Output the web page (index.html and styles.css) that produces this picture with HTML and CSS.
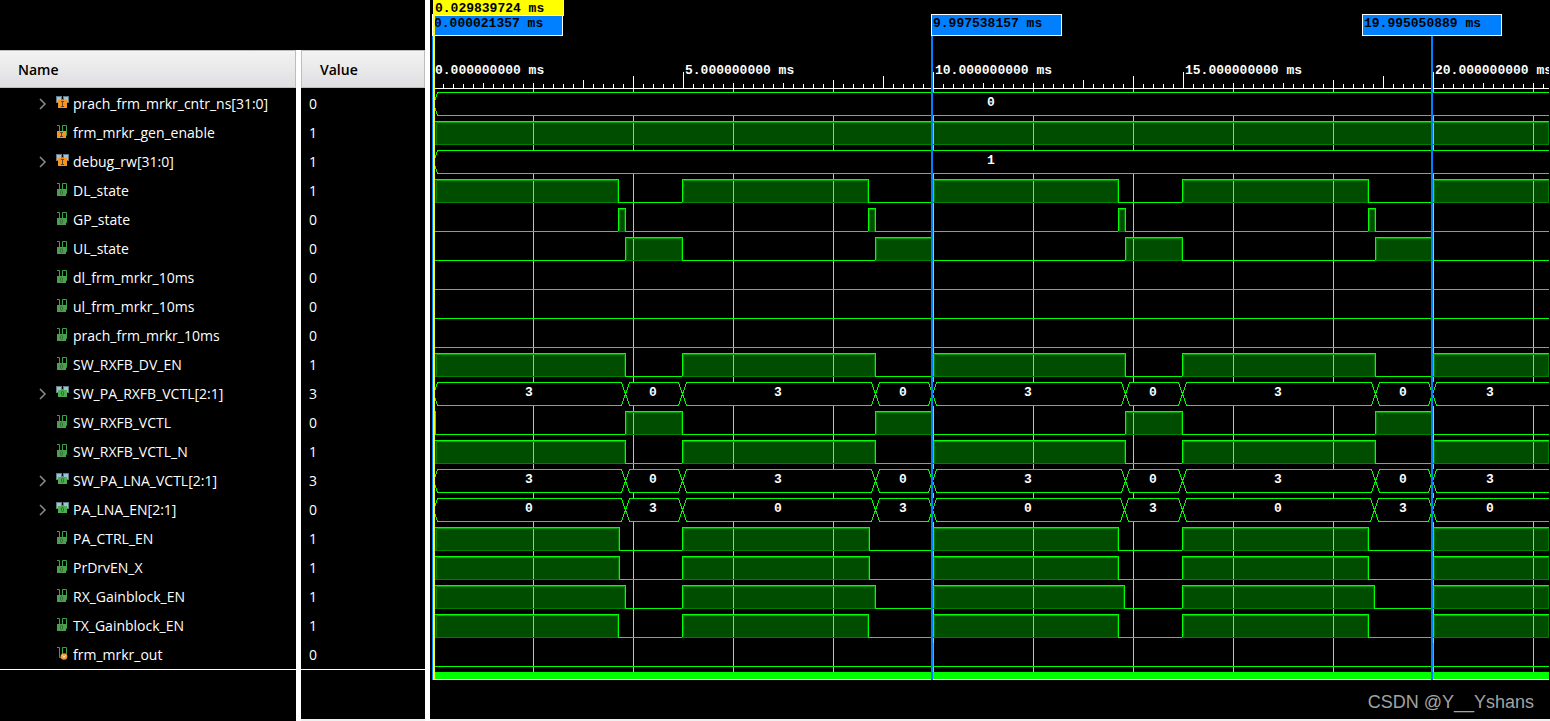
FILE: index.html
```html
<!DOCTYPE html>
<html lang="en">
<head>
  <meta charset="UTF-8">
  <meta name="viewport" content="width=device-width, initial-scale=1.0">
  <title>Waveform</title>
  <link rel="stylesheet" href="styles.css">
</head>
<body>

  <!-- Icon shapes -->
  <svg class="defs" width="0" height="0">
    <symbol id="chevron" viewBox="0 0 8 12">
      <path d="M1 1l5 5-5 5" fill="none" stroke="#8c8c8c" stroke-width="1.5"/>
    </symbol>
    <symbol id="bus-in" viewBox="0 0 13 13">
      <path d="M0 0h6v3h1V0h6v7h-2v1H2V7H0z" fill="#647c8a"/>
      <path d="M1 1h4v3H3v2H1zM8 1h4v5h-1V4H8z" fill="#9cc3d8"/>
      <path d="M2 4h9v8H2z" fill="#f7941d"/>
      <path d="M5 5.500h3M6.500 5.500v5M5 10.500h3" fill="none" stroke="#5a4632"/>
    </symbol>
    <symbol id="bus-out" viewBox="0 0 13 13">
      <path d="M0 0h6v3h1V0h6v7h-2v1H2V7H0z" fill="#647c8a"/>
      <path d="M1 1h4v3H3v2H1zM8 1h4v5h-1V4H8z" fill="#9cc3d8"/>
      <path d="M2 4h9v7H2z" fill="#4cae50"/>
      <rect x="5.500" y="5.500" width="2" height="4" rx="1" fill="none" stroke="#2f6a34"/>
    </symbol>
    <symbol id="bit-in" viewBox="0 0 13 13">
      <path d="M1 0.500h2.500V6M6.500 6V0.500h4v10H9" fill="none" stroke="#37a548"/>
      <path d="M1 6h9v7H1z" fill="#f7941d"/>
      <path d="M4 7.500h3M5.500 7.500v4M4 11.500h3" fill="none" stroke="#5a4632"/>
    </symbol>
    <symbol id="bit-out" viewBox="0 0 13 13">
      <path d="M1 0.500h2.500V6M6.500 6V0.500h4v10H9" fill="none" stroke="#37a548"/>
      <path d="M1 6h9v7H1z" fill="#4f9e50"/>
      <rect x="4.500" y="7.500" width="2" height="4" rx="1" fill="none" stroke="#336b36"/>
    </symbol>
    <symbol id="bit-virtual" viewBox="0 0 13 13">
      <path d="M1 0.500h2.500v10H6M6.500 7V0.500h4V7" fill="none" stroke="#37a548"/>
      <circle cx="8" cy="9.500" r="3.300" fill="#f59a2c"/>
      <path d="M6.500 8.300L8 10.500l1.500-2.200" fill="none" stroke="#fff3dc"/>
    </symbol>
  </svg>

  <div class="viewer">
    <!-- Signal names -->
    <div class="pane names">
      <table>
        <thead><tr><th>Name</th></tr></thead>
        <tbody id="names"></tbody>
      </table>
    </div>

    <!-- Signal values -->
    <div class="splitter"></div>
    <div class="pane values">
      <table>
        <thead><tr><th>Value</th></tr></thead>
        <tbody id="values"></tbody>
      </table>
    </div>

    <!-- Waveforms -->
    <div class="splitter full"></div>
    <div class="waves">
      <svg id="waves"></svg>
      <div class="watermark">CSDN @Y__Yshans</div>
    </div>
  </div>

  <script src="waves.js"></script>
</body>
</html>
```

FILE: styles.css
```css
body {
  margin: 0;
  background-color: #000;
  color: #fff;
  font-family: "Open Sans", "Noto Sans", sans-serif;
  font-size: 14px;
}
.defs {
  position: absolute;
}
.viewer {
  display: flex;
  height: 100vh;
  overflow: hidden;
}
.pane {
  box-sizing: border-box;
  padding-top: 50px;
  flex: none;
}
.names {
  width: 296px;
}
.values {
  width: 124px;
  border-bottom: 2px solid #f0f0f0;
}
.splitter {
  width: 5px;
  flex: none;
  margin-top: 50px;
  background-color: #fff;
}
.splitter.full {
  margin-top: 0;
}
table {
  width: 100%;
  border-collapse: separate;
  border-spacing: 0;
  border-bottom: 1px solid #fff;
}
th {
  box-sizing: border-box;
  height: 38px;
  padding: 0 18px;
  border: 1px solid #bdbdbd;
  border-left: none;
  background: linear-gradient(#f3f3f3, #dfdfe2);
  color: #000;
  text-align: left;
  font-weight: 600;
}
.values th {
  border-left: 1px solid #bdbdbd;
}
tbody::before {
  content: "";
  display: block;
  height: 1px;
}
td {
  height: 29px;
  padding: 0;
  line-height: 29px;
}
.values td {
  padding-left: 8px;
}
.signal {
  display: flex;
  align-items: center;
  padding-left: 39px;
}
.toggle {
  width: 17px;
  height: 12px;
  padding: 0;
  border: none;
  background: none;
  display: flex;
  flex: none;
}
.toggle svg {
  width: 8px;
  height: 12px;
}
.icon {
  width: 13px;
  height: 13px;
  margin-right: 4px;
  margin-bottom: 2px;
}
.waves {
  flex: 1;
  min-width: 0;
  position: relative;
  padding-right: 1px;
  border-bottom: 2px solid #f0f0f0;
}
.waves svg {
  display: block;
  width: 100%;
  height: 680px;
  shape-rendering: crispEdges;
}
.waves text {
  font-family: "Liberation Mono", monospace;
  font-size: 13px;
  font-weight: bold;
  fill: #fff;
}
.waves .marker-text {
  fill: #000;
}
.watermark {
  position: absolute;
  right: 16px;
  bottom: 5px;
  color: #a3a3a3;
  font-family: "Liberation Sans", Arial, sans-serif;
  font-size: 18px;
  line-height: 24px;
}
```

FILE: waves.js
```js
// icon: symbol id, edges: x positions where the signal toggles, start: first level
const SIGNALS = [
  { name: "prach_frm_mrkr_cntr_ns[31:0]", value: 0, icon: "bus-in", bus: ["0"], edges: [] },
  { name: "frm_mrkr_gen_enable", value: 1, icon: "bit-in", start: 1, edges: [] },
  { name: "debug_rw[31:0]", value: 1, icon: "bus-in", bus: ["1"], edges: [] },
  { name: "DL_state", value: 1, icon: "bit-out", start: 1, edges: [188, 252, 438, 503, 688, 752, 938, 1003] },
  { name: "GP_state", value: 0, icon: "bit-out", start: 0, edges: [188, 195, 438, 445, 688, 695, 938, 945] },
  { name: "UL_state", value: 0, icon: "bit-out", start: 0, edges: [195, 252, 445, 502, 695, 752, 945, 1002] },
  { name: "dl_frm_mrkr_10ms", value: 0, icon: "bit-out", start: 0, edges: [] },
  { name: "ul_frm_mrkr_10ms", value: 0, icon: "bit-out", start: 0, edges: [] },
  { name: "prach_frm_mrkr_10ms", value: 0, icon: "bit-out", start: 0, edges: [] },
  { name: "SW_RXFB_DV_EN", value: 1, icon: "bit-out", start: 1, edges: [195, 252, 445, 503, 695, 752, 945, 1003] },
  { name: "SW_PA_RXFB_VCTL[2:1]", value: 3, icon: "bus-out", bus: ["3", "0"], edges: [195, 252, 445, 502, 695, 752, 945, 1002] },
  { name: "SW_RXFB_VCTL", value: 0, icon: "bit-out", start: 1, edges: [5, 195, 252, 445, 502, 695, 752, 945, 1002] },
  { name: "SW_RXFB_VCTL_N", value: 1, icon: "bit-out", start: 1, edges: [195, 252, 445, 503, 695, 752, 945, 1003] },
  { name: "SW_PA_LNA_VCTL[2:1]", value: 3, icon: "bus-out", bus: ["3", "0"], edges: [195, 252, 445, 502, 695, 752, 945, 1002] },
  { name: "PA_LNA_EN[2:1]", value: 0, icon: "bus-out", bus: ["0", "3"], edges: [195, 252, 445, 502, 694, 752, 944, 1002] },
  { name: "PA_CTRL_EN", value: 1, icon: "bit-out", start: 1, edges: [189, 252, 439, 503, 688, 752, 938, 1003] },
  { name: "PrDrvEN_X", value: 1, icon: "bit-out", start: 1, edges: [189, 252, 439, 503, 688, 752, 938, 1003] },
  { name: "RX_Gainblock_EN", value: 1, icon: "bit-out", start: 1, edges: [195, 252, 445, 503, 694, 752, 944, 1003] },
  { name: "TX_Gainblock_EN", value: 1, icon: "bit-out", start: 1, edges: [188, 252, 438, 503, 688, 752, 938, 1003] },
  { name: "frm_mrkr_out", value: 0, icon: "bit-virtual", start: 0, edges: [503, 503, 1003, 1003] }
];

const MARKERS = [
  { x: 2, box: 2, width: 131, label: "0.000021357 ms" },
  { x: 501, box: 501, width: 131, label: "9.997538157 ms" },
  { x: 1001, box: 932, width: 140, label: "19.995050889 ms" }
];

const ZERO = 3;       // x of 0 ms
const LEFT = 5;       // waves start right of the cursor
const FIRST_ROW = 92;
const ROW = 29;
const HIGH = 23;      // height of a wave

const wavesSvg = document.getElementById("waves");
let out = "";

function rect(x, y, w, h, fill) {
  out += `<rect x="${x}" y="${y}" width="${w}" height="${h}" fill="${fill}"/>`;
}

function text(x, y, label, extra) {
  out += `<text x="${x}" y="${y}" ${extra || ""}>${label}</text>`;
}

// Name and value tables
document.getElementById("names").innerHTML = SIGNALS.map((s) => `
  <tr><td><div class="signal">
    ${s.bus ? `<button class="toggle" aria-label="Expand ${s.name}"><svg><use href="#chevron"/></svg></button>` : `<span class="toggle"></span>`}
    <svg class="icon"><use href="#${s.icon}"/></svg>${s.name}
  </div></td></tr>`).join("");
document.getElementById("values").innerHTML = SIGNALS.map((s) => `<tr><td>${s.value}</td></tr>`).join("");

const end = wavesSvg.clientWidth;

// Ruler and grid
for (let x = ZERO + 100; x < end; x += 100) {
  rect(x, 89, 1, 583, "#c0c0c0");
}
const tickTop = [72, 83, 83, 80, 76];
for (let i = 1; ZERO + i * 10 < end; i++) {
  const top = i % 5 === 0 ? tickTop[(i / 5) % 5] : 84;
  rect(ZERO + i * 10, top, 1, 88 - top, "#fff");
}
rect(LEFT, 88, end - LEFT, 1, "#fff");
for (let ms = 0; ZERO + ms * 50 < end; ms += 5) {
  text(ZERO + ms * 50 + 2, 74, ms + ".000000000 ms");
}

function drawBit(s, top) {
  const low = top + HIGH;
  let level = s.start;
  let x = LEFT;
  [...s.edges, end].forEach((next) => {
    if (level && next > x) {
      rect(x, top, next - x, HIGH + 1, "rgba(0, 255, 0, 0.3)");
      rect(x + 1, top + 1, next - x - 1, 1, "#00a000");
      rect(x + 1, top + 1, 1, HIGH, "#008000");
      rect(next - 1, top + 1, 1, HIGH, "#008000");
      rect(x, low, next - x, 1, "#008000");
      rect(x, top, next - x, 1, "#0f0");
    } else if (next > x) {
      rect(x, low, next - x, 1, "#0f0");
    }
    if (next !== end) {
      rect(next, top, 1, HIGH + 1, "#0f0");
    }
    x = next;
    level = 1 - level;
  });
}

function drawBus(s, top) {
  const low = top + HIGH;
  const y1 = top + 0.5;
  const y2 = low + 0.5;
  const mid = top + 12;
  rect(LEFT, top, end - LEFT, HIGH + 1, "#000");
  let x = ZERO;
  [...s.edges, end].forEach((next, i) => {
    const a = x + 0.5;
    const b = next + 0.5;
    const right = next === end ? `H${end}M${end} ${y2}` : `H${b - 4}L${b} ${mid}L${b - 4} ${y2}`;
    out += `<path d="M${a} ${mid}L${a + 4} ${y1}${right}H${a + 4}L${a} ${mid}" fill="none" stroke="#0f0"/>`;
    text(Math.floor((x + next) / 2), top + 14, s.bus[i % 2], 'text-anchor="middle"');
    x = next;
  });
}

SIGNALS.forEach((s, i) => {
  const top = FIRST_ROW + i * ROW;
  if (s.bus) {
    drawBus(s, top);
  } else {
    drawBit(s, top);
  }
});

// Overview bar
rect(LEFT, 672, end - LEFT, 7, "#0f0");
rect(LEFT, 679, end - LEFT, 1, "#fff");

// Markers and main cursor
MARKERS.forEach((m) => {
  rect(m.x, 36, 2, 644, "#0080ff");
  rect(m.box, 14, m.width, 22, "#fff");
  rect(m.box + 1, 15, m.width - 2, 20, "#0080ff");
  text(m.box + 2, 27, m.label, 'class="marker-text"');
});
rect(3, 0, 131, 16, "#fff");
rect(3, 0, 130, 15, "#ff0");
rect(3, 0, 2, 680, "#ff0");
text(5, 12, "0.029839724 ms", 'class="marker-text"');

wavesSvg.innerHTML = out;
```
